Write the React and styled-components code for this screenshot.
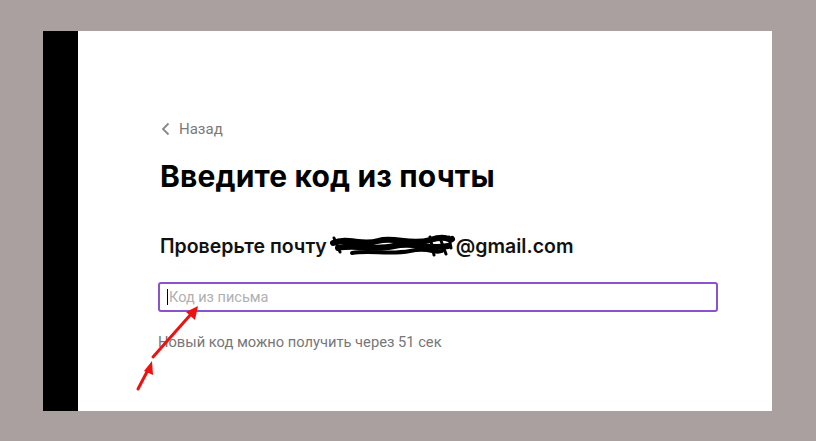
import React from 'react';
import styled, { createGlobalStyle } from 'styled-components';

const Global = createGlobalStyle`
  html, body { margin: 0; padding: 0; background: #a9a09f; }
  body { font-family: Inter, "Noto Sans", sans-serif; }
`;

const Page = styled.div`
  width: 816px;
  height: 441px;
  padding: 31px 0 0 43px;
  box-sizing: border-box;
  position: relative;
`;

const Frame = styled.div`
  display: flex;
  width: 729px;
  height: 380px;
  background: #fff;
`;

const SideBar = styled.div`
  width: 35px;
  background: #000;
`;

const Content = styled.div`
  flex: 1;
  display: flex;
  flex-direction: column;
  padding: 89px 0 0 82px;
`;

const Back = styled.div`
  display: flex;
  align-items: center;
  gap: 9px;
  padding-left: 1px;
  color: #7a7a7a;
  font-family: Roboto, sans-serif;
  font-size: 15px;
  line-height: 18px;
`;

const Title = styled.h1`
  margin: 20px 0 0;
  font-size: 30px;
  font-weight: 700;
  line-height: 36px;
  color: #000;
  letter-spacing: 0.15px;
`;

const Subtitle = styled.div`
  margin-top: 40px;
  display: flex;
  align-items: center;
  font-size: 19.5px;
  font-weight: 600;
  line-height: 24px;
  color: #111;
`;

const Input = styled.div`
  margin: 24px 0 0 -2px;
  width: 560px;
  height: 30px;
  box-sizing: border-box;
  border: 2px solid #8952cf;
  border-radius: 3px;
  display: flex;
  align-items: center;
  padding-left: 7px;
  font-family: Roboto, sans-serif;
  font-size: 14.5px;
  color: #b0b0b0;
`;

const Caret = styled.span`
  width: 1px;
  height: 16px;
  background: #000;
  margin-right: 1px;
`;

const Hint = styled.div`
  margin-top: 21px;
  font-family: Roboto, sans-serif;
  font-size: 14.7px;
  color: #777;
  margin-left: -2px;
`;

const Arrows = styled.svg`
  position: absolute;
  left: 0;
  top: 0;
  pointer-events: none;
`;

// the hand-drawn redaction over the e-mail name
const Scribble = () => (
  <svg width="126" height="24" viewBox="0 0 126 24" style={{ margin: '0 0 0 3px' }}>
    <g stroke="#000" fill="none" strokeLinecap="round">
      <path d="M3 9 C18 3, 32 12, 48 7 S80 12, 100 6 S118 8, 122 5" strokeWidth="6" />
      <path d="M8 14 C26 10, 44 17, 64 12 S96 16, 118 12" strokeWidth="6" />
      <path d="M22 19 C40 16, 60 21, 80 17 S104 20, 112 17" strokeWidth="4" />
      <path d="M4 4 L10 18 M100 3 L104 21 M110 4 L116 20 M119 3 L121 14" strokeWidth="3" />
    </g>
  </svg>
);

export default function App() {
  return (
    <>
      <Global />
      <Page>
        <Frame>
          <SideBar />
          <Content>
            <Back>
              <svg width="9" height="14" viewBox="0 0 9 14">
                <path d="M7.5 1.5 L2 7 L7.5 12.5" stroke="#888" strokeWidth="1.8" fill="none" />
              </svg>
              Назад
            </Back>
            <Title>Введите код из почты</Title>
            <Subtitle>
              Проверьте почту<Scribble />@gmail.com
            </Subtitle>
            <Input>
              <Caret />
              Код из письма
            </Input>
            <Hint>Новый код можно получить через 51 сек</Hint>
          </Content>
        </Frame>
        <Arrows width="816" height="441">
          <g stroke="#ee1111" strokeWidth="3" fill="#ee1111" strokeLinecap="round">
            <line x1="138" y1="389" x2="149" y2="368" />
            <polygon points="152,361 153,375 144,371" stroke="none" />
            <line x1="153" y1="357" x2="192" y2="313" />
            <polygon points="198,306 195,320 186,312" stroke="none" />
          </g>
        </Arrows>
      </Page>
    </>
  );
}
